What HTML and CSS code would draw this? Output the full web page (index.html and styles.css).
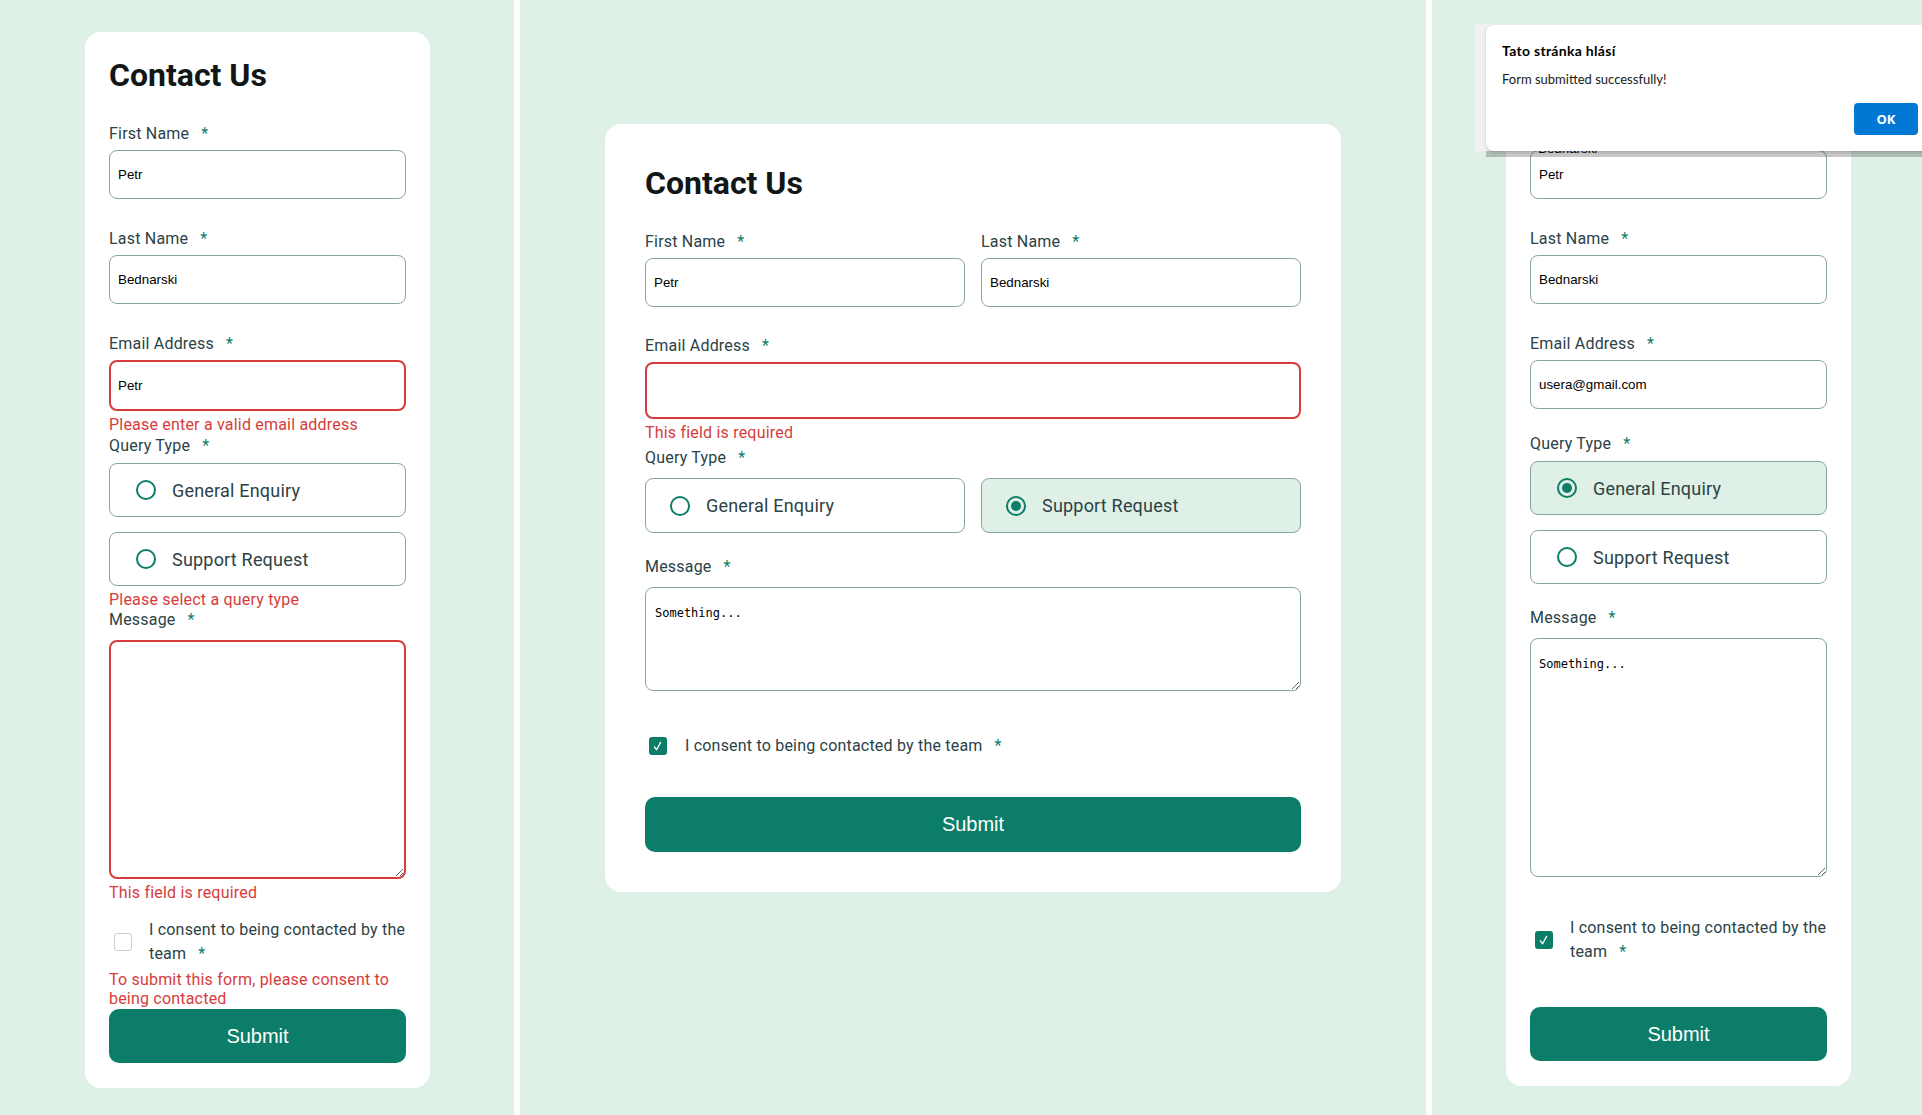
FILE: index.html
```html
<!DOCTYPE html>
<html lang="en">
<head>
<meta charset="utf-8">
<title>Contact Us</title>
<link rel="stylesheet" href="styles.css">
</head>
<body>
<div class="screen">

  <section class="panel panel-a">
    <form class="card card-narrow">
      <h1 class="title">Contact Us</h1>
      <div class="field">
        <label class="field-label">First Name<span class="req">*</span></label>
        <input class="input" value="Petr">
        <div class="err"></div>
      </div>
      <div class="field">
        <label class="field-label">Last Name<span class="req">*</span></label>
        <input class="input" value="Bednarski">
        <div class="err"></div>
      </div>
      <div class="field field-email">
        <label class="field-label">Email Address<span class="req">*</span></label>
        <input class="input input-error-narrow invalid" value="Petr">
        <div class="err">Please enter a valid email address</div>
      </div>
      <div class="field field-query">
        <label class="field-label query-label">Query Type<span class="req">*</span></label>
        <div class="radios radios-stack">
          <div class="radio-option"><span class="dot"></span>General Enquiry</div>
          <div class="radio-option"><span class="dot"></span>Support Request</div>
        </div>
        <div class="err err-query">Please select a query type</div>
      </div>
      <div class="field field-message">
        <label class="field-label message-label">Message<span class="req">*</span></label>
        <textarea class="textarea textarea-tall invalid"></textarea>
        <div class="err">This field is required</div>
      </div>
      <div class="consent">
        <span class="check"></span>
        <p class="consent-text"><span>I consent to being contacted by the </span><span class="nowrap">team<span class="req">*</span></span></p>
      </div>
      <div class="err err-two">To submit this form, please consent to being contacted</div>
      <button type="button" class="submit">Submit</button>
    </form>
  </section>

  <div class="divider"></div>

  <section class="panel panel-b">
    <form class="card card-wide">
      <h1 class="title">Contact Us</h1>
      <div class="name-row">
        <div class="field">
          <label class="field-label">First Name<span class="req">*</span></label>
          <input class="input" value="Petr">
          <div class="err"></div>
        </div>
        <div class="field">
          <label class="field-label">Last Name<span class="req">*</span></label>
          <input class="input" value="Bednarski">
          <div class="err"></div>
        </div>
      </div>
      <div class="field field-email">
        <label class="field-label">Email Address<span class="req">*</span></label>
        <input class="input input-email invalid" value="">
        <div class="err">This field is required</div>
      </div>
      <div class="field field-query">
        <label class="field-label query-label">Query Type<span class="req">*</span></label>
        <div class="radios radios-row">
          <div class="radio-option"><span class="dot"></span>General Enquiry</div>
          <div class="radio-option selected"><span class="dot"></span>Support Request</div>
        </div>
        <div class="err err-query"></div>
      </div>
      <div class="field field-message">
        <label class="field-label message-label">Message<span class="req">*</span></label>
        <textarea class="textarea textarea-short">Something...</textarea>
        <div class="err"></div>
      </div>
      <div class="consent">
        <span class="check checked"><svg viewBox="0 0 18 18" width="18" height="18"><path d="M5.4 9.8 L7.6 12.8 L11.6 5.4" fill="none" stroke="#fff" stroke-width="1.3" stroke-linecap="round" stroke-linejoin="round"/></svg></span>
        <p class="consent-text"><span>I consent to being contacted by the </span><span class="nowrap">team<span class="req">*</span></span></p>
      </div>
      <div class="err err-two"></div>
      <button type="button" class="submit">Submit</button>
    </form>
  </section>

  <div class="divider"></div>

  <section class="panel panel-c">
    <form class="card card-narrow">
      <h1 class="title covered">Contact Us</h1>
      <div class="field">
        <label class="field-label covered">First Name<span class="req">*</span></label>
        <input class="input" value="Petr">
        <div class="err"></div>
      </div>
      <div class="field">
        <label class="field-label">Last Name<span class="req">*</span></label>
        <input class="input" value="Bednarski">
        <div class="err"></div>
      </div>
      <div class="field field-email">
        <label class="field-label">Email Address<span class="req">*</span></label>
        <input class="input" value="usera@gmail.com">
        <div class="err"></div>
      </div>
      <div class="field field-query">
        <label class="field-label query-label">Query Type<span class="req">*</span></label>
        <div class="radios radios-stack">
          <div class="radio-option selected"><span class="dot"></span>General Enquiry</div>
          <div class="radio-option"><span class="dot"></span>Support Request</div>
        </div>
        <div class="err err-query"></div>
      </div>
      <div class="field field-message">
        <label class="field-label message-label">Message<span class="req">*</span></label>
        <textarea class="textarea textarea-tall">Something...</textarea>
        <div class="err"></div>
      </div>
      <div class="consent">
        <span class="check checked"><svg viewBox="0 0 18 18" width="18" height="18"><path d="M5.4 9.8 L7.6 12.8 L11.6 5.4" fill="none" stroke="#fff" stroke-width="1.3" stroke-linecap="round" stroke-linejoin="round"/></svg></span>
        <p class="consent-text"><span>I consent to being contacted by the </span><span class="nowrap">team<span class="req">*</span></span></p>
      </div>
      <div class="err err-two"></div>
      <button type="button" class="submit">Submit</button>
    </form>

    <span class="autofill-peek">Bednarski</span>
    <div class="alert-backdrop"></div>
    <div class="alert" role="alertdialog">
      <div class="alert-title">Tato stránka hlásí</div>
      <div class="alert-msg">Form submitted successfully!</div>
      <button type="button" class="alert-ok">OK</button>
    </div>
  </section>

</div>
</body>
</html>
```

FILE: styles.css
```css
* { box-sizing: border-box; }

html, body {
  margin: 0;
  padding: 0;
}

body {
  background: #dff1e7;
  font-family: Roboto, "Liberation Sans", sans-serif;
  letter-spacing: 0.2px;
  color: #2b4246;
}

.screen {
  display: flex;
  width: 1922px;
  height: 1115px;
  overflow: hidden;
}

.panel {
  background: #dff1e7;
  flex: none;
}

.panel-a { width: 514px; padding: 32px 0 0 85px; }
.panel-b { width: 906px; padding: 124px 0 0 85px; }
.panel-c { width: 490px; padding: 32px 0 0 74px; position: relative; }

.divider {
  flex: none;
  width: 6px;
  background: #ffffff;
}

.card {
  background: #ffffff;
  border-radius: 16px;
}

.card-narrow { width: 345px; padding: 24px 24px 25px; }
.card-wide { width: 736px; padding: 40px; }

.title {
  margin: 0 0 27px;
  font-size: 32px;
  line-height: 38px;
  font-weight: 700;
  letter-spacing: 0;
  color: #111616;
}

.covered { visibility: hidden; }

.field { margin-bottom: 5px; }
.field-email { margin-bottom: 0; }
.field-query { margin-bottom: 0; }
.field-message { margin-bottom: 0; }
.card-wide .field { margin-bottom: 4px; }
.card-wide .field-query,
.card-wide .field-message { margin-bottom: 0; }

.name-row {
  display: grid;
  grid-template-columns: 1fr 1fr;
  column-gap: 16px;
}
.name-row .field { margin-bottom: 4px; }

.field-label {
  display: block;
  height: 24px;
  line-height: 26px;
  font-size: 16px;
  margin-bottom: 5px;
  color: #2b4246;
}

.query-label { margin-bottom: 6px; }
.card-wide .query-label { margin-bottom: 9px; }
.message-label { margin-bottom: 9px; }

.req {
  color: #0c7d69;
  margin-left: 12px;
}

.input {
  display: block;
  width: 100%;
  height: 49px;
  margin: 0;
  border: 1px solid #87a3a6;
  border-radius: 8px;
  padding: 0 8px;
  font-family: "Liberation Sans", Arial, sans-serif;
  font-size: 13.33px;
  letter-spacing: 0;
  color: #000;
  background: #fff;
  outline: none;
}

.input-error-narrow { height: 51px; }
.input-email { height: 57px; }

.invalid {
  border: 2px solid #d73c3c;
  padding-left: 7px;
}

.textarea {
  display: block;
  width: 100%;
  margin: 0;
  border: 1px solid #87a3a6;
  border-radius: 8px;
  padding: 18px 8px 8px;
  font-family: "DejaVu Sans Mono", "Liberation Mono", monospace;
  font-size: 12px;
  line-height: 14px;
  letter-spacing: 0;
  color: #000;
  background: #fff;
  outline: none;
  resize: vertical;
}

.textarea.invalid { border: 2px solid #d73c3c; }
.textarea-tall { height: 239px; }
.textarea-short { height: 104px; padding-left: 9px; }

.err {
  height: 22px;
  padding-top: 4px;
  line-height: 19px;
  font-size: 16px;
  color: #d73c3c;
}

.err-query { height: 21px; }

.err-two {
  height: 38px;
  padding-top: 0;
  margin-top: 4px;
  margin-bottom: 1px;
}
.card-wide .err-two { margin-top: 1px; margin-bottom: 0; }

.radios-stack {
  display: flex;
  flex-direction: column;
  gap: 15px;
}

.radios-row {
  display: grid;
  grid-template-columns: 1fr 1fr;
  column-gap: 16px;
}

.radio-option {
  display: flex;
  align-items: center;
  height: 54px;
  padding-left: 26px;
  border: 1px solid #87a3a6;
  border-radius: 8px;
  font-size: 18px;
  color: #2b4246;
  background: #fff;
}

.card-wide .radio-option {
  height: 55px;
  padding-left: 24px;
}

.radio-option.selected { background: #dff1e7; }

.dot {
  flex: none;
  width: 20px;
  height: 20px;
  border: 2px solid #0c7d69;
  border-radius: 50%;
  margin-right: 16px;
  display: flex;
  align-items: center;
  justify-content: center;
}

.selected .dot::after {
  content: "";
  width: 10px;
  height: 10px;
  border-radius: 50%;
  background: #0c7d69;
}

.consent {
  display: flex;
  align-items: center;
  margin-top: 17px;
  padding-left: 5px;
}

.card-wide .consent {
  margin-top: 21px;
  padding-left: 4px;
}

.check {
  flex: none;
  width: 18px;
  height: 18px;
  border: 1px solid #c9d0d1;
  border-radius: 3px;
  background: #fff;
  margin-right: 17px;
}

.check svg { display: block; }

.check.checked {
  border: none;
  background: #0c7d69;
}

.card-wide .check { margin-right: 18px; }

.consent-text {
  margin: 0;
  font-size: 16px;
  line-height: 24px;
  color: #2b4246;
}

.nowrap { white-space: nowrap; }

.submit {
  display: block;
  width: 100%;
  height: 54px;
  border: none;
  border-radius: 10px;
  background: #0c7d69;
  color: #fff;
  font-family: "Liberation Sans", Arial, sans-serif;
  font-size: 20px;
  font-weight: 400;
  letter-spacing: 0;
  cursor: pointer;
}

.card-wide .submit { height: 55px; }

/* browser alert overlay */
.autofill-peek {
  position: absolute;
  left: 106px;
  top: 141px;
  font-family: "Liberation Sans", Arial, sans-serif;
  font-size: 13.33px;
  line-height: 16px;
  letter-spacing: 0;
  color: #000;
}

.alert-backdrop {
  position: absolute;
  left: 43px;
  top: 24px;
  right: 0;
  height: 127px;
  background: #f1f1f1;
}

.alert-backdrop::after {
  content: "";
  position: absolute;
  left: 11px;
  right: 0;
  top: 100%;
  height: 6px;
  background: rgba(0, 0, 0, 0.22);
}

.alert {
  position: absolute;
  left: 54px;
  top: 25px;
  width: 480px;
  height: 126px;
  background: #fff;
  border-radius: 8px;
  box-shadow: 0 1px 3px rgba(0, 0, 0, 0.2);
  padding: 18px 16px 0;
  font-family: Lato, "Open Sans", sans-serif;
  letter-spacing: 0;
  color: #000;
}

.alert-title {
  font-size: 14px;
  font-weight: 700;
  letter-spacing: 0.3px;
  line-height: 16px;
}

.alert-msg {
  margin-top: 12px;
  font-size: 13px;
  line-height: 16px;
  color: #1a1a1a;
}

.alert-ok {
  position: absolute;
  left: 368px;
  top: 78px;
  width: 64px;
  height: 32px;
  border: none;
  border-radius: 4px;
  background: #0078d4;
  color: #fff;
  font-family: "Open Sans", sans-serif;
  font-size: 13px;
  font-weight: 700;
  letter-spacing: 0;
}
```
